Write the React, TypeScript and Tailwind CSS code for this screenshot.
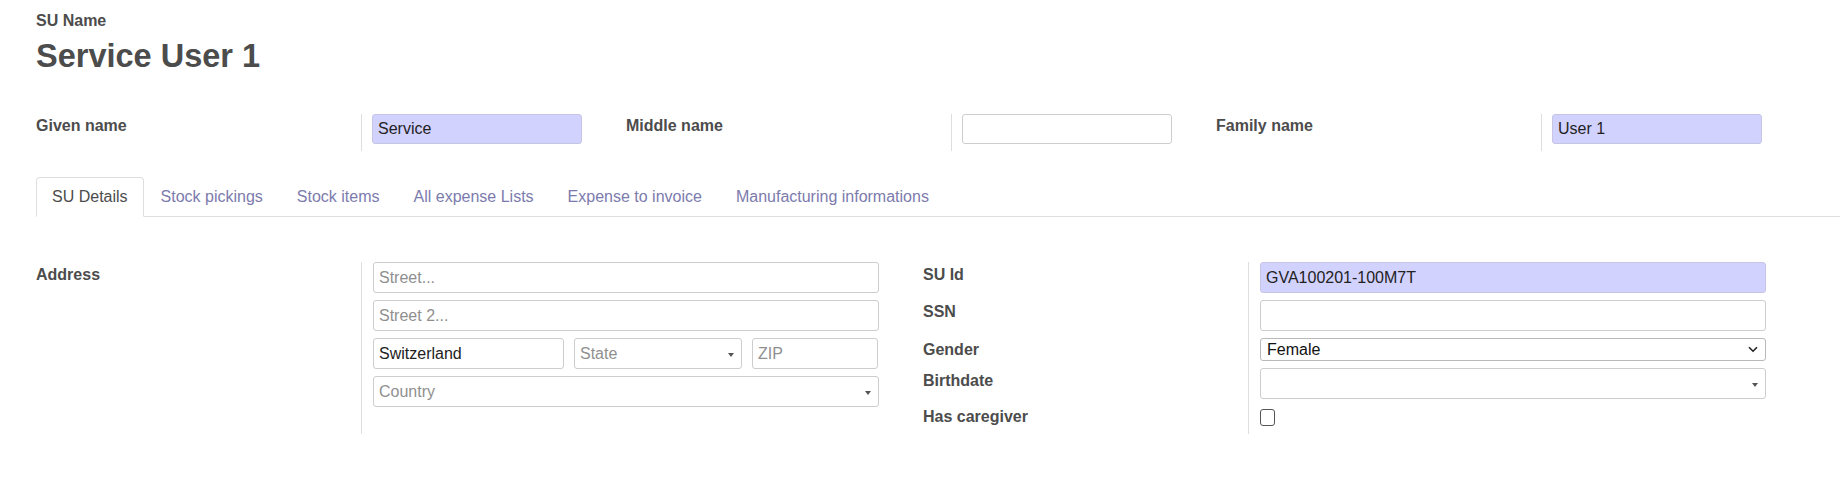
import React from "react";

const LABEL =
  "w-[325px] shrink-0 text-[16px] leading-[20px] font-bold text-[#4c4c4c]";

function Caret() {
  return (
    <span className="w-0 h-0 border-x-[3.5px] border-x-transparent border-t-[4px] border-t-[#555] mt-[2px]" />
  );
}

function Field({
  value,
  placeholder,
  highlight,
  caret,
  className = "",
}: {
  value?: string;
  placeholder?: string;
  highlight?: boolean;
  caret?: boolean;
  className?: string;
}) {
  return (
    <div
      className={
        "h-[31px] rounded-[3px] border flex items-center justify-between pl-[5px] pr-[7px] text-[16px] leading-[20px] " +
        (highlight ? "bg-[#d2d2ff] border-[#c6c6e4] " : "bg-white border-[#cdcdcd] ") +
        className
      }
    >
      <span className={value ? "text-[#222]" : "text-[#8f8f8f]"}>{value ?? placeholder ?? ""}</span>
      {caret ? <Caret /> : null}
    </div>
  );
}

function NameGroup({ label, value }: { label: string; value?: string }) {
  return (
    <div className="flex w-[590px] shrink-0">
      <div className={LABEL + " pt-[2px]"}>{label}</div>
      <div className="border-l border-[#dedede] pl-[10px] pb-[7px]">
        <div
          className={
            "h-[30px] w-[210px] rounded-[3px] border flex items-center pl-[5px] text-[16px] text-[#222] " +
            (value ? "bg-[#d2d2ff] border-[#c6c6e4]" : "bg-white border-[#cdcdcd]")
          }
        >
          {value ?? ""}
        </div>
      </div>
    </div>
  );
}

const tabs = [
  "SU Details",
  "Stock pickings",
  "Stock items",
  "All expense Lists",
  "Expense to invoice",
  "Manufacturing informations",
];

function RightRow({
  label,
  labelClass,
  cellClass,
  children,
}: {
  label: string;
  labelClass: string;
  cellClass: string;
  children: React.ReactNode;
}) {
  return (
    <div className="flex">
      <div className={LABEL + " " + labelClass}>{label}</div>
      <div className={"flex-1 border-l border-[#dedede] pl-[11px] " + cellClass}>
        {children}
      </div>
    </div>
  );
}

export default function App() {
  return (
    <div className="w-[1840px] h-[486px] bg-white font-['Liberation_Sans',Arial,sans-serif] text-[#4c4c4c] overflow-hidden">
      <div className="pl-[36px] pt-[11px]">
        <div className="text-[16px] leading-[20px] font-bold text-[#4c4c4c]">SU Name</div>
        <div className="mt-[5px] text-[32.5px] leading-[40px] font-bold text-[#4c4c4c]">
          Service User 1
        </div>

        <div className="mt-[38px] flex">
          <NameGroup label="Given name" value="Service" />
          <NameGroup label="Middle name" />
          <NameGroup label="Family name" value="User 1" />
        </div>

        <div className="mt-[26px] flex border-b border-[#dedede]">
          {tabs.map((t, i) => (
            <div
              key={t}
              className={
                "h-[40px] -mb-px flex items-center text-[16px] leading-[20px] border rounded-t-[4px] " +
                (i === 0
                  ? "px-[15px] border-[#dedede] border-b-white text-[#4c4c4c]"
                  : "px-[16px] border-transparent text-[#7c7bad]")
              }
            >
              {t}
            </div>
          ))}
        </div>

        <div className="mt-[45px] flex">
          {/* left half */}
          <div className="flex w-[887px] shrink-0">
            <div className={LABEL + " pt-[3px]"}>Address</div>
            <div className="border-l border-[#dedede] pl-[11px] pb-[5px]">
              <div className="w-[506px] flex flex-col gap-[7px]">
                <Field placeholder="Street..." />
                <Field placeholder="Street 2..." />
                <div className="flex gap-[10px]">
                  <Field value="Switzerland" className="w-[191px]" />
                  <Field placeholder="State" caret className="w-[168px]" />
                  <Field placeholder="ZIP" className="w-[126px]" />
                </div>
                <Field placeholder="Country" caret />
              </div>
            </div>
          </div>

          {/* right half */}
          <div className="flex flex-col w-[843px] shrink-0">
            <RightRow label="SU Id" labelClass="pt-[3px]" cellClass="pb-[7px]">
              <Field value="GVA100201-100M7T" highlight className="w-[506px]" />
            </RightRow>
            <RightRow label="SSN" labelClass="pt-[2px]" cellClass="pb-[7px]">
              <Field className="w-[506px]" />
            </RightRow>
            <RightRow label="Gender" labelClass="pt-[2px]" cellClass="pb-[7px]">
              <div className="w-[506px] h-[23px] rounded-[3px] border border-[#b9b9b9] flex items-center justify-between pl-[6px] pr-[7px] text-[16px] text-[#111]">
                <span>Female</span>
                <svg width="10" height="7" viewBox="0 0 10 7">
                  <path d="M1 1.2 L5 5.2 L9 1.2" fill="none" stroke="#222" strokeWidth="1.6" />
                </svg>
              </div>
            </RightRow>
            <RightRow label="Birthdate" labelClass="pt-[3px]" cellClass="pb-[10px]">
              <Field caret className="w-[506px]" />
            </RightRow>
            <RightRow label="Has caregiver" labelClass="-mt-[2px]" cellClass="pb-[8px]">
              <div className="w-[15px] h-[17px] rounded-[3px] border border-[#555] bg-white" />
            </RightRow>
          </div>
        </div>
      </div>
    </div>
  );
}
